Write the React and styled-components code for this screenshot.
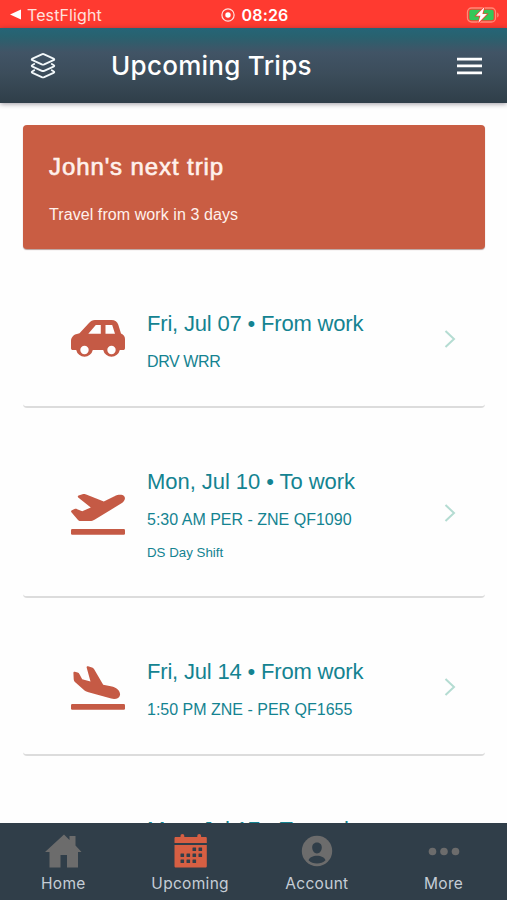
import styled, { createGlobalStyle } from "styled-components";

const GlobalStyle = createGlobalStyle`
  * {
    box-sizing: border-box;
  }
  body {
    margin: 0;
    background: #fefefe;
    font-family: "Liberation Sans", Arial, sans-serif;
  }
`;

const Screen = styled.div`
  height: 900px;
  display: flex;
  flex-direction: column;
  overflow: hidden;
`;

const StatusBar = styled.div`
  flex: none;
  height: 28px;
  padding: 1px 7px 0 10px;
  display: grid;
  grid-template-columns: 1fr auto 1fr;
  align-items: center;
  background: #ff3a30;
  color: #fff;
  font-family: Inter, sans-serif;
  font-size: 16px;
`;

const BackLink = styled.div`
  display: flex;
  align-items: center;
  gap: 6px;
  color: #ffe0dc;
  letter-spacing: 0.1px;
`;

const Clock = styled.div`
  display: flex;
  align-items: center;
  gap: 6px;
  font-weight: 600;
  letter-spacing: 0.2px;
`;

const BatterySlot = styled.div`
  justify-self: end;
  display: flex;
`;

const Header = styled.header`
  flex: none;
  position: relative;
  height: 75px;
  padding: 1px 25px 0 29px;
  display: flex;
  align-items: center;
  background: linear-gradient(#256577 0%, #29616f 12%, #415466 32%, #3c4d5b 60%, #2f3e49 100%);
  box-shadow: 0 1px 5px rgba(40, 30, 50, 0.45);
  color: #fff;
`;

const Title = styled.h1`
  flex: 1;
  margin: -2px 0 0 54px;
  font-family: Inter, sans-serif;
  font-size: 26px;
  font-weight: 500;
  letter-spacing: 0.28px;
`;

const Content = styled.main`
  flex: 1;
  min-height: 0;
  overflow: hidden;
  padding: 22px 22px 0 23px;
`;

const NextTrip = styled.section`
  height: 124px;
  padding: 27px 26px;
  border-radius: 4px;
  background: #c95d43;
  box-shadow: 0 1px 1px rgba(80, 20, 10, 0.4);
  color: #fff1ec;
`;

const NextTripTitle = styled.h2`
  margin: 0;
  font-size: 24px;
  line-height: 29px;
  font-weight: 400;
  letter-spacing: 0.9px;
  -webkit-text-stroke: 0.6px currentColor;
`;

const NextTripText = styled.p`
  margin: 24px 0 0;
  font-size: 16px;
  line-height: 20px;
  letter-spacing: 0.08px;
`;

const Trip = styled.article`
  height: ${(props) => (props.$tall ? "190.5px" : "157.5px")};
  padding: 60px 28px 0 48px;
  display: grid;
  grid-template-columns: 54px 1fr 14px;
  column-gap: 22px;
  align-items: start;
  border-bottom: 2px solid #dcdcdc;
  border-radius: 4px;
  color: #148391;

  &:first-of-type {
    margin-top: 1px;
  }
`;

const TripIcon = styled.div`
  height: ${(props) => (props.$tall ? "93px" : "59px")};
  display: flex;
  align-items: center;
  color: #c55a45;
`;

const Arrow = styled.div`
  height: ${(props) => (props.$tall ? "91px" : "58px")};
  display: flex;
  align-items: center;
  color: #b4dcd2;
`;

const TripTitle = styled.h3`
  margin: 0;
  font-size: 22px;
  line-height: 28px;
  font-weight: 400;
  letter-spacing: ${(props) => props.$spacing || "-0.05px"};
  white-space: nowrap;
`;

const Route = styled.p`
  margin: 14px 0 0;
  font-size: 16px;
  line-height: 20px;
  letter-spacing: ${(props) => props.$spacing || "0"};
`;

const Shift = styled.p`
  margin: 14px 0 0;
  font-size: 13.3px;
  line-height: 18px;
`;

const TabBar = styled.nav`
  flex: none;
  height: 77px;
  display: grid;
  grid-template-columns: repeat(4, 1fr);
  background: #303e49;
`;

const Tab = styled.div`
  padding-top: 10px;
  display: flex;
  flex-direction: column;
  align-items: center;
  gap: 5px;
  color: #c5cdd6;
  font-family: Inter, sans-serif;
  font-size: 15.5px;
  line-height: 20px;
  letter-spacing: 0.3px;

  svg {
    color: ${(props) => (props.$active ? "#d65f43" : "#6c6c6c")};
  }
`;

const LayersIcon = () => (
  <svg width="28" height="28" viewBox="0 0 28 28" fill="none" stroke="#f2f8fa" strokeWidth="1.9" strokeLinejoin="round" strokeLinecap="round">
    <path d="M12.800 2.300Q14 1.800 15.200 2.300L24.500 6.600Q26 7.400 24.500 8.200L15.200 12.400Q14 12.900 12.800 12.400L3.500 8.200Q2 7.400 3.500 6.600Z" />
    <path d="M5.200 12 3.500 13Q2 13.800 3.500 14.600L12.800 18.800Q14 19.300 15.200 18.800L24.500 14.600Q26 13.800 24.500 13L22.800 12" />
    <path d="M5.200 18.300 3.500 19.300Q2 20.100 3.500 20.900L12.800 25.100Q14 25.600 15.200 25.100L24.500 20.900Q26 20.100 24.500 19.300L22.800 18.300" />
  </svg>
);

const MenuIcon = () => (
  <svg width="26" height="18" viewBox="0 0 26 18" fill="#fff">
    <path d="M1 0.7h25v2.700h-25zM1 7.600h25v2.700h-25zM1 14.500h25v2.700h-25z" />
  </svg>
);

const RecordIcon = () => (
  <svg width="14" height="14" viewBox="0 0 14 14">
    <circle cx="7" cy="7" r="6.1" fill="none" stroke="#ffe4e0" strokeWidth="1.2" />
    <circle cx="7" cy="7" r="2.7" fill="#fff" />
  </svg>
);

const BatteryIcon = () => (
  <svg width="34" height="18" viewBox="0 0 34 18">
    <rect x="1.5" y="2" width="28" height="14" rx="4" fill="none" stroke="#ff8b78" strokeWidth="1.3" />
    <rect x="3.3" y="3.8" width="24.4" height="10.4" rx="2" fill="#34c759" />
    <path d="M31.2 6.5c2 .8 2 4.2 0 5z" fill="#ff8b78" />
    <path d="M18.4 1 10 9.7h4.4L12.2 17 21 8.1h-4.6z" fill="#fff" stroke="#ff3a30" strokeWidth="1.4" paintOrder="stroke" />
  </svg>
);

const CarIcon = () => (
  <svg width="54" height="39" viewBox="0 0 54 39">
    <path
      fill="currentColor"
      fillRule="evenodd"
      d="M24 0H40.500c3.500 0 5.800 1.600 6.800 4.800L50 13.500c2.700 1.300 4 3.200 4 5.500V28c0 1.500-.7 2-2 2h-3.200a8.500 8.500 0 0 1-16.600 0H21.800a8.500 8.500 0 0 1-16.600 0H2c-1.300 0-2-.5-2-2v-7c0-3.500 2.500-6.500 6-7L8.500 13.200 18 3C19.800 1 21.500 0 24 0ZM24.800 5 17.300 13.700H29.800V5ZM34.500 5V13.700H44L41.200 5ZM13.500 25.800a4.200 4.200 0 1 0 0 8.400 4.200 4.200 0 0 0 0-8.400ZM40.500 25.800a4.200 4.200 0 1 0 0 8.400 4.200 4.200 0 0 0 0-8.400Z"
    />
  </svg>
);

const DepartureIcon = () => (
  <svg width="54" height="41" viewBox="0 0 54 41" fill="currentColor">
    <path d="M7.200 3.500C6.500 2.800 6.700 2 7.500 1.600L11.500.2C12.800-.2 14-.1 15.200.5L32.800 7.500 43.500 2.200C47.500.3 51.500.5 53.200 2.200 54.800 4 53.800 7 50.500 9.300L23.500 25.800C22 26.700 20.800 27 19 27H9.500C8.300 27 7.500 26.600 6.800 25.700L.4 18.200C-.2 17.400 0 16.700.9 16.300L3.500 15.100C4.500 14.700 5.300 14.800 6.200 15.200L11.200 17.300 19.800 13.500Z" />
    <rect y="35" width="54" height="5.700" rx="1.200" />
  </svg>
);

const ArrivalIcon = () => (
  <svg width="54" height="44" viewBox="0 0 54 44" fill="currentColor">
    <path d="M2.400 6.800C2.400 5.900 3 5.500 3.900 5.700L6.600 6.500C7.500 6.800 8 7.300 8.500 8.200L11.200 13.200 19.500 15.400 15.700 1.800C15.400.8 16-.1 17.100.2L21 1.400C22 1.700 22.500 2.200 23 3.100L32.200 18.800 41 20.600C46 22 49.600 25.400 49 29 48.400 32.300 45 33.500 40.200 32.600L17.500 26.200C15.500 25.600 14 24.800 12.400 23.400L4.500 16.500C3.300 15.400 2.800 14.500 2.700 13Z" />
    <rect y="38" width="54" height="5.700" rx="1.200" />
  </svg>
);

const ChevronIcon = () => (
  <svg width="14" height="20" viewBox="0 0 14 20" fill="none" stroke="currentColor" strokeWidth="2">
    <path d="M2.500 2 11 10 2.500 18" />
  </svg>
);

const HomeIcon = () => (
  <svg width="38" height="36" viewBox="0 0 38 36" fill="currentColor">
    <path d="M20 1.500 25.500 7V3H31.500V12.500L37.500 19H34V34.500H23V22H16.500V34.500H5.500V19H1Z" />
  </svg>
);

const calendarDots = [
  [20, 15], [26, 15],
  [8, 21], [14, 21], [20, 21], [26, 21],
  [8, 27], [14, 27], [20, 27],
];

const CalendarIcon = () => (
  <svg width="34" height="36" viewBox="0 0 34 36">
    <path fill="currentColor" d="M2.800 4H7.500V2.800a1.900 1.900 0 0 1 3.800 0V4h13V2.800a1.900 1.900 0 0 1 3.800 0V4H32.500c.8 0 1.300.5 1.300 1.300V10H1.500V5.300c0-.8.500-1.300 1.300-1.300ZM1.500 12h32.300v21c0 1-.5 1.500-1.500 1.500H3c-1 0-1.500-.5-1.500-1.500Z" />
    {calendarDots.map(([x, y]) => (
      <rect key={`${x}-${y}`} x={x - 0.5} y={y - 0.5} width="3.600" height="3.600" rx="0.500" fill="#303e49" />
    ))}
  </svg>
);

const AccountIcon = () => (
  <svg width="32" height="36" viewBox="0 0 32 36">
    <circle cx="16" cy="18" r="15.200" fill="currentColor" />
    <path d="M16 9.500c-3.200 0-5 2.300-4.800 5.300.2 3 2 5.700 4.800 5.700s4.600-2.700 4.800-5.700c.2-3-1.600-5.300-4.800-5.300Z" fill="#303e49" />
    <path d="M7.500 27.300c1-3 4.500-4.500 8.500-4.500s7.500 1.500 8.500 4.500c-2.200 2.300-5.200 3.300-8.500 3.300s-6.300-1-8.500-3.300Z" fill="#303e49" />
  </svg>
);

const MoreIcon = () => (
  <svg width="32" height="36" viewBox="0 0 32 36" fill="currentColor">
    <circle cx="4.500" cy="18.500" r="3.800" />
    <circle cx="16" cy="18.500" r="3.800" />
    <circle cx="27.500" cy="18.500" r="3.800" />
  </svg>
);

const trips = [
  {
    title: "Fri, Jul 07 • From work",
    titleSpacing: "-0.18px",
    route: "DRV WRR",
    routeSpacing: "-0.4px",
    icon: <CarIcon />,
  },
  {
    title: "Mon, Jul 10 • To work",
    route: "5:30 AM PER - ZNE QF1090",
    shift: "DS Day Shift",
    icon: <DepartureIcon />,
  },
  {
    title: "Fri, Jul 14 • From work",
    titleSpacing: "-0.18px",
    route: "1:50 PM ZNE - PER QF1655",
    icon: <ArrivalIcon />,
  },
  { title: "Mon, Jul 17 • To work" },
];

const tabs = [
  { label: "Home", icon: <HomeIcon /> },
  { label: "Upcoming", icon: <CalendarIcon />, active: true },
  { label: "Account", icon: <AccountIcon /> },
  { label: "More", icon: <MoreIcon /> },
];

const App = () => {
  return (
    <Screen>
      <GlobalStyle />
      <StatusBar>
        <BackLink>
          <svg width="11" height="11" viewBox="0 0 11 11" fill="#fff">
            <path d="M0 5.500 11 .5v10z" />
          </svg>
          TestFlight
        </BackLink>
        <Clock>
          <RecordIcon />
          08:26
        </Clock>
        <BatterySlot>
          <BatteryIcon />
        </BatterySlot>
      </StatusBar>
      <Header>
        <LayersIcon />
        <Title>Upcoming Trips</Title>
        <MenuIcon />
      </Header>
      <Content>
        <NextTrip>
          <NextTripTitle>John's next trip</NextTripTitle>
          <NextTripText>Travel from work in 3 days</NextTripText>
        </NextTrip>
        {trips.map((trip) => (
          <Trip key={trip.title} $tall={!!trip.shift}>
            <TripIcon $tall={!!trip.shift}>{trip.icon}</TripIcon>
            <div>
              <TripTitle $spacing={trip.titleSpacing}>{trip.title}</TripTitle>
              {trip.route && <Route $spacing={trip.routeSpacing}>{trip.route}</Route>}
              {trip.shift && <Shift>{trip.shift}</Shift>}
            </div>
            <Arrow $tall={!!trip.shift}>
              <ChevronIcon />
            </Arrow>
          </Trip>
        ))}
      </Content>
      <TabBar>
        {tabs.map((tab) => (
          <Tab key={tab.label} $active={tab.active}>
            {tab.icon}
            {tab.label}
          </Tab>
        ))}
      </TabBar>
    </Screen>
  );
};

export default App;
